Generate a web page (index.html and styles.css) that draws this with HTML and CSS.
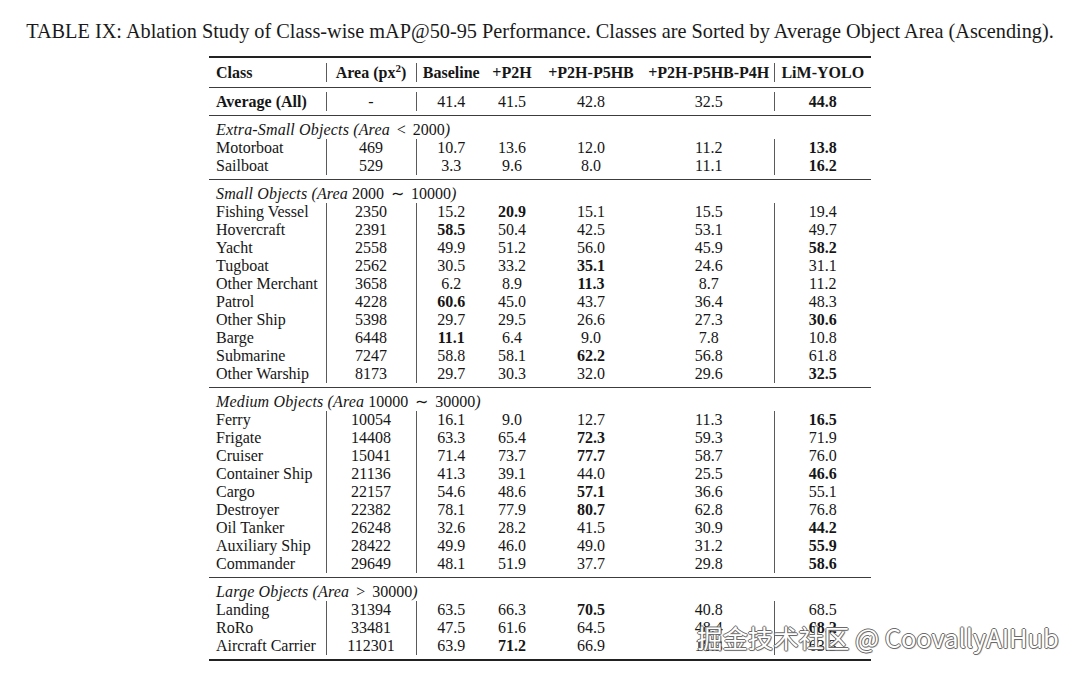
FILE: index.html
```html
<!DOCTYPE html>
<html lang="en">
<head>
<meta charset="utf-8">
<title>Table IX</title>
<link rel="stylesheet" href="styles.css">
</head>
<body>
<div class="page">
  <p class="caption">TABLE IX: Ablation Study of Class-wise mAP@50-95 Performance. Classes are Sorted by Average Object Area (Ascending).</p>
  <table class="results">
    <colgroup>
      <col class="c-class"><col class="c-area"><col class="c-base"><col class="c-p2h"><col class="c-p5hb"><col class="c-p4h"><col class="c-lim">
    </colgroup>
    <tbody>
      <tr class="rule thick"><td colspan="7"></td></tr>
      <tr class="gap g5"><td colspan="7"></td></tr>
      <tr class="head">
        <th class="name">Class</th>
        <th class="vl">Area (px<sup>2</sup>)</th>
        <th class="vl">Baseline</th>
        <th>+P2H</th>
        <th>+P2H-P5HB</th>
        <th>+P2H-P5HB-P4H</th>
        <th class="vl">LiM-YOLO</th>
      </tr>
      <tr class="gap g5"><td colspan="7"></td></tr>
      <tr class="rule"><td colspan="7"></td></tr>
      <tr class="gap g4"><td colspan="7"></td></tr>
      <tr class="avg">
        <td class="name"><b>Average (All)</b></td>
        <td class="vl">-</td>
        <td class="vl">41.4</td>
        <td>41.5</td>
        <td>42.8</td>
        <td>32.5</td>
        <td class="vl"><b>44.8</b></td>
      </tr>
      <tr class="gap g4"><td colspan="7"></td></tr>
      <tr class="rule"><td colspan="7"></td></tr>

      <tr class="gap g5"><td colspan="7"></td></tr>
      <tr class="group"><td colspan="7"><i>Extra-Small Objects (Area</i> <span class="rel">&lt;</span> 2000<i>)</i></td></tr>
      <tr><td class="name">Motorboat</td><td class="vl">469</td><td class="vl">10.7</td><td>13.6</td><td>12.0</td><td>11.2</td><td class="vl"><b>13.8</b></td></tr>
      <tr><td class="name">Sailboat</td><td class="vl">529</td><td class="vl">3.3</td><td>9.6</td><td>8.0</td><td>11.1</td><td class="vl"><b>16.2</b></td></tr>
      <tr class="gap g4"><td colspan="7"></td></tr>
      <tr class="rule"><td colspan="7"></td></tr>

      <tr class="gap g5"><td colspan="7"></td></tr>
      <tr class="group"><td colspan="7"><i>Small Objects (Area</i> 2000 <span class="rel">∼</span> 10000<i>)</i></td></tr>
      <tr><td class="name">Fishing Vessel</td><td class="vl">2350</td><td class="vl">15.2</td><td><b>20.9</b></td><td>15.1</td><td>15.5</td><td class="vl">19.4</td></tr>
      <tr><td class="name">Hovercraft</td><td class="vl">2391</td><td class="vl"><b>58.5</b></td><td>50.4</td><td>42.5</td><td>53.1</td><td class="vl">49.7</td></tr>
      <tr><td class="name">Yacht</td><td class="vl">2558</td><td class="vl">49.9</td><td>51.2</td><td>56.0</td><td>45.9</td><td class="vl"><b>58.2</b></td></tr>
      <tr><td class="name">Tugboat</td><td class="vl">2562</td><td class="vl">30.5</td><td>33.2</td><td><b>35.1</b></td><td>24.6</td><td class="vl">31.1</td></tr>
      <tr><td class="name">Other Merchant</td><td class="vl">3658</td><td class="vl">6.2</td><td>8.9</td><td><b>11.3</b></td><td>8.7</td><td class="vl">11.2</td></tr>
      <tr><td class="name">Patrol</td><td class="vl">4228</td><td class="vl"><b>60.6</b></td><td>45.0</td><td>43.7</td><td>36.4</td><td class="vl">48.3</td></tr>
      <tr><td class="name">Other Ship</td><td class="vl">5398</td><td class="vl">29.7</td><td>29.5</td><td>26.6</td><td>27.3</td><td class="vl"><b>30.6</b></td></tr>
      <tr><td class="name">Barge</td><td class="vl">6448</td><td class="vl"><b>11.1</b></td><td>6.4</td><td>9.0</td><td>7.8</td><td class="vl">10.8</td></tr>
      <tr><td class="name">Submarine</td><td class="vl">7247</td><td class="vl">58.8</td><td>58.1</td><td><b>62.2</b></td><td>56.8</td><td class="vl">61.8</td></tr>
      <tr><td class="name">Other Warship</td><td class="vl">8173</td><td class="vl">29.7</td><td>30.3</td><td>32.0</td><td>29.6</td><td class="vl"><b>32.5</b></td></tr>
      <tr class="gap g4"><td colspan="7"></td></tr>
      <tr class="rule"><td colspan="7"></td></tr>

      <tr class="gap g5"><td colspan="7"></td></tr>
      <tr class="group"><td colspan="7"><i>Medium Objects (Area</i> 10000 <span class="rel">∼</span> 30000<i>)</i></td></tr>
      <tr><td class="name">Ferry</td><td class="vl">10054</td><td class="vl">16.1</td><td>9.0</td><td>12.7</td><td>11.3</td><td class="vl"><b>16.5</b></td></tr>
      <tr><td class="name">Frigate</td><td class="vl">14408</td><td class="vl">63.3</td><td>65.4</td><td><b>72.3</b></td><td>59.3</td><td class="vl">71.9</td></tr>
      <tr><td class="name">Cruiser</td><td class="vl">15041</td><td class="vl">71.4</td><td>73.7</td><td><b>77.7</b></td><td>58.7</td><td class="vl">76.0</td></tr>
      <tr><td class="name">Container Ship</td><td class="vl">21136</td><td class="vl">41.3</td><td>39.1</td><td>44.0</td><td>25.5</td><td class="vl"><b>46.6</b></td></tr>
      <tr><td class="name">Cargo</td><td class="vl">22157</td><td class="vl">54.6</td><td>48.6</td><td><b>57.1</b></td><td>36.6</td><td class="vl">55.1</td></tr>
      <tr><td class="name">Destroyer</td><td class="vl">22382</td><td class="vl">78.1</td><td>77.9</td><td><b>80.7</b></td><td>62.8</td><td class="vl">76.8</td></tr>
      <tr><td class="name">Oil Tanker</td><td class="vl">26248</td><td class="vl">32.6</td><td>28.2</td><td>41.5</td><td>30.9</td><td class="vl"><b>44.2</b></td></tr>
      <tr><td class="name">Auxiliary Ship</td><td class="vl">28422</td><td class="vl">49.9</td><td>46.0</td><td>49.0</td><td>31.2</td><td class="vl"><b>55.9</b></td></tr>
      <tr><td class="name">Commander</td><td class="vl">29649</td><td class="vl">48.1</td><td>51.9</td><td>37.7</td><td>29.8</td><td class="vl"><b>58.6</b></td></tr>
      <tr class="gap g4"><td colspan="7"></td></tr>
      <tr class="rule"><td colspan="7"></td></tr>

      <tr class="gap g5"><td colspan="7"></td></tr>
      <tr class="group"><td colspan="7"><i>Large Objects (Area</i> <span class="rel">&gt;</span> 30000<i>)</i></td></tr>
      <tr><td class="name">Landing</td><td class="vl">31394</td><td class="vl">63.5</td><td>66.3</td><td><b>70.5</b></td><td>40.8</td><td class="vl">68.5</td></tr>
      <tr><td class="name">RoRo</td><td class="vl">33481</td><td class="vl">47.5</td><td>61.6</td><td>64.5</td><td>48.4</td><td class="vl"><b>68.2</b></td></tr>
      <tr><td class="name">Aircraft Carrier</td><td class="vl">112301</td><td class="vl">63.9</td><td><b>71.2</b></td><td>66.9</td><td>18.3</td><td class="vl">63.3</td></tr>
      <tr class="gap g4"><td colspan="7"></td></tr>
      <tr class="rule thick"><td colspan="7"></td></tr>
    </tbody>
  </table>
  <div class="watermark">掘金技术社区 @ CoovallyAIHub</div>
</div>
</body>
</html>
```

FILE: styles.css
```css
html, body {
  margin: 0;
  padding: 0;
  background: #ffffff;
}

.page {
  position: relative;
  width: 1080px;
  height: 673px;
  overflow: hidden;
  font-family: "Liberation Serif", "Times New Roman", serif;
  color: #161616;
}

.caption {
  margin: 19px 0 0 0;
  font-size: 20.3px;
  line-height: 24px;
  text-align: center;
  white-space: nowrap;
  color: #1a1a1a;
}

.results {
  margin: 13px auto 0 auto;
  width: 662px;
  table-layout: fixed;
  border-collapse: collapse;
  border-spacing: 0;
  font-size: 16px;
}

.c-class { width: 117px; }
.c-area { width: 90px; }
.c-base { width: 70px; }
.c-p2h { width: 52px; }
.c-p5hb { width: 106px; }
.c-p4h { width: 130px; }
.c-lim { width: 97px; }

.results td,
.results th {
  padding: 0;
  height: 18px;
  line-height: 18px;
  text-align: center;
  white-space: nowrap;
  vertical-align: middle;
}

.results th {
  font-weight: bold;
}

.results .head th,
.results .avg td {
  height: 19px;
  line-height: 19px;
}

.results .name {
  text-align: left;
  padding-left: 7px;
}

.results .vl {
  border-left: 1px solid #5a5a5a;
}

.results b {
  font-weight: bold;
}

.results sup {
  font-size: 11px;
  line-height: 0;
  vertical-align: 6px;
}

.results .group td {
  text-align: left;
  padding-left: 7px;
}

.results .group i {
  letter-spacing: 0.15px;
}

.results .group .rel {
  display: inline-block;
  margin: 0 3px;
}

.results .gap td {
  height: 0;
  padding: 0;
  line-height: 0;
  font-size: 0;
  border: none;
}

.results .g5 td { height: 5px; }
.results .g4 td { height: 4px; }

.results .rule td {
  height: 0;
  padding: 0;
  line-height: 0;
  font-size: 0;
  border-top: 1px solid #3c3c3c;
}

.results .rule.thick td {
  border-top: 2px solid #222222;
}

.watermark {
  position: absolute;
  left: 697px;
  top: 619px;
  font-family: "Noto Sans CJK SC", "Noto Sans", sans-serif;
  font-size: 25.4px;
  line-height: 36px;
  color: #ffffff;
  white-space: nowrap;
  text-shadow:
    1px 0 0 #6a6a6a,
    -1px 0 0 #6a6a6a,
    0 1px 0 #6a6a6a,
    0 -1px 0 #6a6a6a,
    1px 1px 1px rgba(0, 0, 0, 0.35);
}
```
